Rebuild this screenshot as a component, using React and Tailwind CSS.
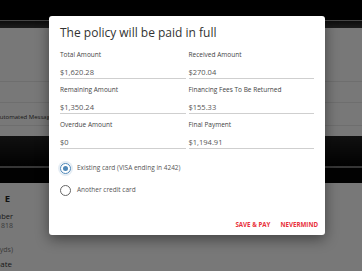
import React, { useState } from 'react';

const fields = [
  ['Total Amount', '$1,620.28'],
  ['Received Amount', '$270.04'],
  ['Remaining Amount', '$1,350.24'],
  ['Financing Fees To Be Returned', '$155.33'],
  ['Overdue Amount', '$0'],
  ['Final Payment', '$1,194.91'],
];

function Field({ label, value }) {
  return (
    <div className="flex flex-col pb-[6px]">
      <span className="h-[10px] text-[6.5px] leading-[10px] text-[#444]">{label}</span>
      <span className="mt-[7px] h-[10px] text-[7.5px] leading-[10px] text-[#555] border-b border-[#cfcfcf] box-content pb-[1px]">{value}</span>
    </div>
  );
}

function Radio({ checked, label, onClick }) {
  return (
    <button onClick={onClick} className="flex items-center h-[12px] gap-[6px] text-left">
      <span
        className={
          checked
            ? 'w-[11px] h-[11px] rounded-full border-[1.5px] border-[#4f88b8] flex items-center justify-center ring-2 ring-[#4f88b8]/15'
            : 'w-[11px] h-[11px] rounded-full border-[1.2px] border-[#666]'
        }
      >
        {checked && <span className="w-[5px] h-[5px] rounded-full bg-[#4f88b8]" />}
      </span>
      <span className="text-[6.5px] text-[#555]">{label}</span>
    </button>
  );
}

function App() {
  const [card, setCard] = useState('existing');

  return (
    <div className="relative w-[362px] h-[271px] overflow-hidden bg-[#f0f0f0] font-['Open_Sans',sans-serif]">
      {/* page behind the dialog */}
      <div className="flex flex-col">
        <div className="h-[20px] bg-black" />
        <div className="h-px bg-[#8a8a8a]" />
        <div className="h-[7px] bg-gradient-to-b from-[#1a1a1a] to-[#3a3a3a]" />
        <div className="h-[54px] border-b border-[#dcdcdc]" />
        <div className="h-[21px] border-b border-[#dcdcdc]" />
        <div className="h-[23px] border-b border-[#dcdcdc] flex items-center pt-[6px]">
          <span className="whitespace-nowrap text-[6px] text-[#333] ml-[-4px]">Automated Messages</span>
        </div>
        <div className="h-[10px]" />
        <div className="h-[30px] bg-gradient-to-b from-[#222] to-[#050505]" />
        <div className="h-[2px] bg-[#6a6a6a]" />
        <div className="h-[15px] bg-[#050505]" />
        <div className="flex flex-col w-[14px] pt-[9px]">
          <div className="flex justify-end w-[10px]">
            <span className="whitespace-nowrap text-[9.5px] font-bold text-[#222]">PART&nbsp;&nbsp;E</span>
          </div>
          <div className="flex justify-end w-[13px] mt-[5px]">
            <span className="whitespace-nowrap text-[7.5px] text-[#333] leading-[10px]">VIN Number</span>
          </div>
          <div className="flex justify-end w-[13px]">
            <span className="whitespace-nowrap text-[7px] text-[#777] leading-[10px]">1HG 818</span>
          </div>
          <div className="flex justify-end w-[13px] mt-[14px]">
            <span className="whitespace-nowrap text-[7px] text-[#777] leading-[10px]">(yds)</span>
          </div>
          <div className="flex justify-end w-[12px] mt-[4px]">
            <span className="whitespace-nowrap text-[8px] text-[#333] leading-[10px]">Date</span>
          </div>
          <div className="flex justify-end w-[13px]">
            <span className="whitespace-nowrap text-[7px] text-[#777] leading-[10px]">2025</span>
          </div>
        </div>
      </div>

      {/* overlay */}
      <div className="absolute inset-0 bg-black/50">
        <div className="absolute left-[49px] top-[16px] w-[276px] h-[219px] bg-white rounded-[3px] shadow-[0_4px_14px_rgba(0,0,0,0.45)] flex flex-col pl-[11px] pr-[11px] pt-[9px]">
          <h2 className="text-[12px] leading-[16px] text-[#333]">The policy will be paid in full</h2>
          <div className="grid grid-cols-2 gap-x-[3px] mt-[9px]">
            {fields.map(([l, v]) => (
              <Field key={l} label={l} value={v} />
            ))}
          </div>
          <div className="flex flex-col gap-[10px] mt-[7px]">
            <Radio checked={card === 'existing'} label="Existing card (VISA ending in 4242)" onClick={() => setCard('existing')} />
            <Radio checked={card === 'other'} label="Another credit card" onClick={() => setCard('other')} />
          </div>
          <div className="flex justify-end gap-[10px] mt-[24px] mr-[-4px]">
            <button className="text-[6.2px] font-bold text-[#e8303a]">SAVE &amp; PAY</button>
            <button className="text-[6.2px] font-bold text-[#e8303a]">NEVERMIND</button>
          </div>
        </div>
      </div>
    </div>
  );
}

export default App;
